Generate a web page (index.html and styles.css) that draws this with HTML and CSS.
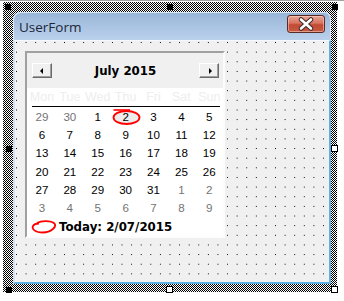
FILE: index.html
```html
<!DOCTYPE html>
<html lang="en">
<head>
  <meta charset="UTF-8">
  <link rel="stylesheet" href="styles.css">
</head>

<body>
  <div class="stage">
    <div class="selection">
      <span class="handle fixed" style="left:2px;top:2px"></span>
      <span class="handle fixed" style="left:164px;top:2px"></span>
      <span class="handle fixed" style="left:329px;top:2px"></span>
      <span class="handle fixed" style="left:3px;top:144px"></span>
      <span class="handle free" style="left:328px;top:143px"></span>
      <span class="handle fixed" style="left:3px;top:285px"></span>
      <span class="handle free" style="left:163px;top:284px"></span>
      <span class="handle free" style="left:328px;top:284px"></span>

      <div class="form">
        <div class="titlebar">
          <span class="caption">UserForm</span>
          <span class="close">
            <svg width="38" height="18" viewBox="0 0 38 18">
              <path d="M14 4.5 L24 13.5 M24 4.5 L14 13.5" stroke="#3b2a2a" stroke-width="4.6" stroke-linecap="round"/>
              <path d="M14 4.5 L24 13.5 M24 4.5 L14 13.5" stroke="#fff" stroke-width="2.6" stroke-linecap="round"/>
            </svg>
          </span>
        </div>

        <div class="client">
          <div class="calendar">
            <div class="cal-head">
              <span class="nav"><i class="arrow left"></i></span>
              <span class="month">July 2015</span>
              <span class="nav"><i class="arrow right"></i></span>
            </div>
            <div class="weekdays">
              <span>Mon</span><span>Tue</span><span>Wed</span><span>Thu</span><span>Fri</span><span>Sat</span><span>Sun</span>
            </div>
            <div class="rule"></div>
            <div class="days">
              <span class="other">29</span><span class="other">30</span><span>1</span>
              <span class="picked">
                <svg class="ring" width="32" height="18" viewBox="0 0 32 18">
                  <ellipse cx="15.5" cy="9.5" rx="13" ry="6.5" fill="#ededed" stroke="#f00" stroke-width="1.8"/>
                  <path d="M2.5 2 L19 2" stroke="#f00" stroke-width="1.6"/>
                </svg>
                <b>2</b>
              </span>
              <span>3</span><span>4</span><span>5</span>
              <span>6</span><span>7</span><span>8</span><span>9</span><span>10</span><span>11</span><span>12</span>
              <span>13</span><span>14</span><span>15</span><span>16</span><span>17</span><span>18</span><span>19</span>
              <span>20</span><span>21</span><span>22</span><span>23</span><span>24</span><span>25</span><span>26</span>
              <span>27</span><span>28</span><span>29</span><span>30</span><span>31</span><span class="other">1</span><span class="other">2</span>
              <span class="other">3</span><span class="other">4</span><span class="other">5</span><span class="other">6</span><span class="other">7</span><span class="other">8</span><span class="other">9</span>
            </div>
            <div class="today">
              <svg width="26" height="16" viewBox="0 0 26 16">
                <path d="M6 4 C10 1.5 20 1.5 23.5 4.5 C26 8 20 13.5 12 13.5 C4 13.5 0.5 10 2 7 C3 5 6 4.5 8 4.5" fill="none" stroke="#f00" stroke-width="1.8"/>
              </svg>
              <span class="today-text">Today: 2/07/2015</span>
            </div>
          </div>
        </div>
      </div>
    </div>
  </div>
</body>

</html>
```

FILE: styles.css
```css
body {
  margin: 0;
  background: #fff;
  border-top: 1px solid #a0a0a0;
  font-family: "Liberation Sans", Arial, sans-serif;
}

.stage {
  padding: 1px 7px 9px 3px;
}

.selection {
  position: relative;
  width: 334px;
  height: 290px;
  box-sizing: border-box;
  padding: 10px 6px 8px 10px;
  background: repeating-conic-gradient(#000 0 25%, #fff 0 50%) 0 0 / 2px 2px;
}

.handle {
  position: absolute;
  width: 6px;
  height: 6px;
  box-sizing: border-box;
}

.handle.fixed {
  background: #000;
}

.handle.free {
  width: 7px;
  height: 7px;
  background: #fff;
  border: 1px solid #000;
}

.form {
  width: 318px;
  height: 272px;
  display: flex;
  flex-direction: column;
}

.titlebar {
  height: 28px;
  flex: none;
  display: flex;
  align-items: center;
  padding-left: 6px;
  border-radius: 7px 7px 0 0;
  background: linear-gradient(#98b4d6, #a9c3e2 50%, #bad1ec);
  box-shadow: inset 1px 1px 0 #dce8f5, inset -1px 0 0 #dce8f5;
}

.caption {
  font-family: "Open Sans", sans-serif;
  font-size: 13.5px;
  color: #1b2738;
  padding-top: 2px;
}

.close {
  margin-left: auto;
  margin-right: 6px;
  align-self: flex-start;
  margin-top: 3px;
  width: 38px;
  height: 18px;
  box-sizing: border-box;
  border: 1px solid #5b2b26;
  border-radius: 3px;
  background: linear-gradient(#e8a493, #d8735f 45%, #c24a33 55%, #c85a42);
  box-shadow: inset 0 0 0 1px rgba(255, 220, 210, 0.5);
  display: flex;
}

.close svg {
  margin: -1px;
}

.client {
  flex: 1;
  border-left: 2px solid #d2e2f3;
  border-right: 2px solid #5eb0e2;
  border-bottom: 2px solid #5eb0e2;
  border-top: 1px solid #f4f8fc;
  padding: 10px 0 0 10px;
  background-color: #f0f0f0;
  background-image: conic-gradient(from 270deg at 1px 1px, #000 25%, transparent 0);
  background-size: 9.6px 9.65px;
  background-position: 1px 1px;
}

.calendar {
  width: 200px;
  height: 187px;
  box-sizing: border-box;
  border: 2px solid;
  border-color: #a0a0a0 #fcfcfc #fcfcfc #a0a0a0;
  background: #fff;
  display: flex;
  flex-direction: column;
}

.cal-head {
  height: 35px;
  flex: none;
  background: #f0f0f0;
  display: flex;
  align-items: center;
  padding: 0 4px 0 5px;
}

.nav {
  width: 20px;
  height: 15px;
  box-sizing: border-box;
  background: #f0f0f0;
  border: 1px solid;
  border-color: #fff #6a6a6a #6a6a6a #fff;
  box-shadow: inset -1px -1px 0 #a0a0a0;
  display: flex;
  align-items: center;
  justify-content: center;
}

.arrow {
  width: 0;
  height: 0;
  border-top: 3px solid transparent;
  border-bottom: 3px solid transparent;
}

.arrow.left {
  border-right: 3px solid #000;
  margin-left: -2px;
}

.arrow.right {
  border-left: 3px solid #000;
  margin-right: -2px;
}

.month {
  flex: 1;
  text-align: center;
  font-family: "DejaVu Sans", sans-serif;
  font-weight: bold;
  font-size: 11.8px;
  color: #000;
}

.weekdays,
.days {
  display: grid;
  grid-template-columns: repeat(7, 27.9px);
  margin-left: 1px;
  text-align: center;
}

.weekdays {
  height: 18px;
  line-height: 18px;
  font-size: 12.5px;
  color: #eeeeee;
}

.rule {
  height: 1px;
  margin: 0 3px 0 5px;
  background: #000;
}

.days {
  padding-top: 1px;
  grid-auto-rows: 18.2px;
  line-height: 18.2px;
  font-size: 11.6px;
  color: #000;
}

.days .other {
  color: #747474;
}

.picked {
  position: relative;
}

.picked b {
  position: relative;
  font-weight: normal;
}

.ring {
  position: absolute;
  left: -1px;
  top: 0;
}

.today {
  flex: 1;
  display: flex;
  align-items: center;
  gap: 2px;
  padding-left: 4px;
}

.today-text {
  font-family: "DejaVu Sans", sans-serif;
  font-weight: bold;
  font-size: 11.8px;
  color: #000;
}
```
